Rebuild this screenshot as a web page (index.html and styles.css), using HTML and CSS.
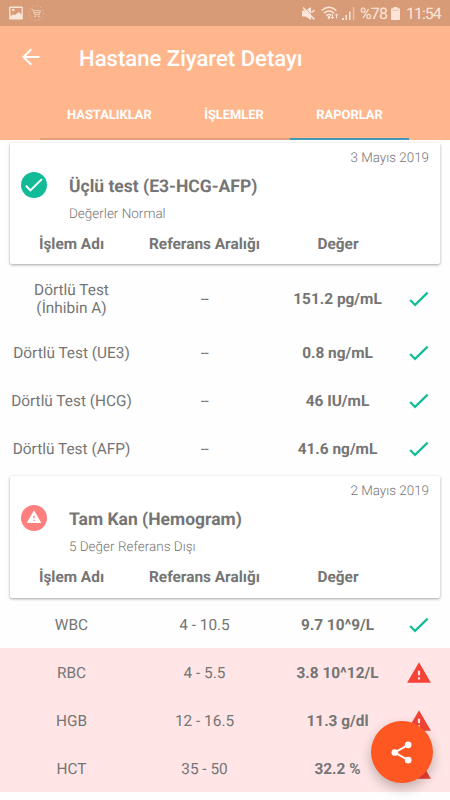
FILE: index.html
```html
<!DOCTYPE html>
<html lang="tr">
<head>
<meta charset="utf-8">
<title>Hastane Ziyaret Detayı</title>
<link rel="stylesheet" href="styles.css">
</head>
<body>
<svg width="0" height="0" class="defs">
  <symbol id="check" viewBox="0 0 24 24"><path d="M3.2 12.9l4.9 5L20.6 5.6" fill="none" stroke="currentColor" stroke-width="2.2"/></symbol>
  <symbol id="warning" viewBox="0 0 24 24"><path fill="currentColor" fill-rule="evenodd" d="M1 21h22L12 2 1 21zm12-3h-2v-2h2v2zm0-4h-2v-4h2v4z"/></symbol>
</svg>
<header class="header">
  <div class="status">
    <svg class="photo" viewBox="0 0 14 14"><path fill="currentColor" fill-rule="evenodd" d="M1 .5h12q.8 0 .8.8v11.4q0 .8-.8.8H1q-.8 0-.8-.8V1.3Q.2.5 1 .5zM1.500 2v8l2.500-1.500 2 .5 3.500-3 3 2.500V2zM3 4a1.3 1.3 0 1 1 2.6 0A1.3 1.3 0 0 1 3 4z"/></svg>
    <svg class="cart" viewBox="0 0 16 16" fill="none" stroke="currentColor"><circle cx="8" cy="8" r="7.2" stroke-dasharray="1 2.8" stroke-width=".8"/><path d="M3.5 4.5H5l1.5 5.2h4.8l1.2-4H5.4M6.2 7.6h5.6" stroke-width=".9"/><circle cx="7" cy="11.6" r=".5"/><circle cx="10.8" cy="11.6" r=".5"/></svg>
    <span class="spacer"></span>
    <svg class="mute" viewBox="0 0 13 13"><path fill="currentColor" d="M0 3.500h3.500L9 0v13L3.500 9.500H0z"/><path d="M1.900 0l11 11.500" stroke="#d79c77" stroke-width="1"/><path d="M1 .5l11.500 12M9.500 5.300l3-2" stroke="currentColor" stroke-width="1.500"/></svg>
    <svg class="wifi" viewBox="0 0 18 14" fill="none" stroke="currentColor" stroke-width="1.4"><path d="M.7 4.5Q8 -2 15.3 4.5M3 7.1q5-4.2 10 0M5.3 9.6q2.7-2.2 5 0"/><path d="M11.5 8v4.5M10 11l1.5 1.6L13 11M15.5 12.5V8M14 9.5l1.5-1.6L17 9.5" stroke-width="1"/><circle cx="8" cy="11.5" r=".7" fill="currentColor"/></svg>
    <svg class="signal" viewBox="0 0 13 13"><path fill="currentColor" d="M0 11h2v2H0zM3.500 8h1.500v5H3.500zM7 4.500h1.500V13H7z"/><path fill="currentColor" opacity=".5" d="M10.800 0h1.500v13h-1.500z"/></svg>
    <span class="battery-text">%78</span>
    <svg class="battery" viewBox="0 0 9 13"><path fill="currentColor" d="M2.500 0h4v1.300H8q1 0 1 1V12q0 1-1 1H1q-1 0-1-1V2.300q0-1 1-1h1.500z"/><path d="M1.500 3.300h6" stroke="#d79c77" stroke-width="1" opacity=".5"/></svg>
    <span class="clock">11:54</span>
  </div>
  <div class="bar">
    <svg class="back" viewBox="0 0 18 18" fill="none" stroke="currentColor" stroke-width="2"><path d="M17.500 9H1.500M9.300 1.200L1.500 9l7.800 7.800"/></svg>
    <h1>Hastane Ziyaret Detayı</h1>
  </div>
  <nav class="tabs">
    <a class="tab first">HASTALIKLAR</a>
    <a class="tab middle">İŞLEMLER</a>
    <a class="tab active">RAPORLAR</a>
  </nav>
</header>
<main>
  <section class="card">
    <div class="date">3 Mayıs 2019</div>
    <div class="summary">
      <span class="badge ok"><svg viewBox="0 0 24 24"><use href="#check"/></svg></span>
      <div><h2>Üçlü test (E3-HCG-AFP)</h2><p>Değerler Normal</p></div>
    </div>
    <div class="cols"><b>İşlem Adı</b><b>Referans Aralığı</b><b>Değer</b></div>
  </section>
  <div class="rows one">
    <div class="row tall"><span>Dörtlü Test<br>(İnhibin A)</span><span class="none">--</span><b>151.2 pg/mL</b><svg class="tick"><use href="#check"/></svg></div>
    <div class="row"><span>Dörtlü Test (UE3)</span><span class="none">--</span><b>0.8 ng/mL</b><svg class="tick"><use href="#check"/></svg></div>
    <div class="row"><span>Dörtlü Test (HCG)</span><span class="none">--</span><b>46 IU/mL</b><svg class="tick"><use href="#check"/></svg></div>
    <div class="row"><span>Dörtlü Test (AFP)</span><span class="none">--</span><b>41.6 ng/mL</b><svg class="tick"><use href="#check"/></svg></div>
  </div>
  <section class="card second">
    <div class="date">2 Mayıs 2019</div>
    <div class="summary">
      <span class="badge bad"><svg viewBox="0 0 24 24"><use href="#warning"/></svg></span>
      <div><h2>Tam Kan (Hemogram)</h2><p>5 Değer Referans Dışı</p></div>
    </div>
    <div class="cols"><b>İşlem Adı</b><b>Referans Aralığı</b><b>Değer</b></div>
  </section>
  <div class="rows two">
    <div class="row"><span>WBC</span><span>4 - 10.5</span><b>9.7 10^9/L</b><svg class="tick"><use href="#check"/></svg></div>
    <div class="row out"><span>RBC</span><span>4 - 5.5</span><b>3.8 10^12/L</b><svg class="alert"><use href="#warning"/></svg></div>
    <div class="row out"><span>HGB</span><span>12 - 16.5</span><b>11.3 g/dl</b><svg class="alert"><use href="#warning"/></svg></div>
    <div class="row out"><span>HCT</span><span>35 - 50</span><b>32.2 %</b><svg class="alert"><use href="#warning"/></svg></div>
  </div>
</main>
<button class="fab" aria-label="Paylaş"><svg viewBox="0 0 22 24"><path d="M18 4L4 12l14 8" fill="none" stroke="#fff" stroke-width="2.100"/><g fill="#fff"><circle cx="18" cy="4" r="3.500"/><circle cx="4" cy="12" r="3.500"/><circle cx="18" cy="20" r="3.500"/></g></svg></button>
</body>
</html>
```
FILE: styles.css
```css
* { box-sizing: border-box; }
body { margin: 0; width: 450px; height: 800px; overflow: hidden; background: #fefefe; color: #757575; font-family: Roboto, "Liberation Sans", sans-serif; text-rendering: geometricPrecision; }
h1, h2, p { margin: 0; }
svg { display: block; flex: none; }
.defs { position: absolute; }
.header { height: 140px; background: #ffb68c; color: #fff; }
.status { display: flex; align-items: center; height: 26px; padding: 0 10px 0 9px; background: #d79c77; color: #fbe5d8; font-size: 16px; letter-spacing: -.9px; }
.photo { width: 14px; height: 14px; }
.cart { width: 16px; height: 16px; margin-left: 5px; opacity: .75; }
.spacer { flex: 1; }
.mute { width: 13px; height: 13px; margin-right: 6px; }
.wifi { width: 18px; height: 14px; margin-right: 3px; }
.signal { width: 13px; height: 13px; margin-right: 5px; }
.battery-text { width: 27px; padding-top: 1px; }
.battery { width: 9px; height: 13px; margin: 0 6px 0 4px; }
.clock { width: 34px; padding-top: 1px; letter-spacing: -1px; }
.bar { display: flex; align-items: center; height: 64px; padding: 0 22px; }
.back { width: 18px; height: 18px; margin-top: -2px; }
h1 { margin-left: 39px; padding-top: 1px; font-size: 22.1px; font-weight: 500; line-height: 30px; white-space: nowrap; }
.tabs { display: flex; height: 50px; padding-left: 40px; }
.tab { display: flex; align-items: center; justify-content: center; width: 119px; padding-top: 2px; border-bottom: 2px solid #dfa07b; font-size: 12.9px; font-weight: 700; }
.tab.first { width: 131px; justify-content: flex-start; padding-left: 27px; }
.tab.middle { padding-left: 7px; }
.tab.active { border-color: #4299b5; }
main { padding-top: 3px; }
.card { height: 121px; margin: 0 10px; padding: 6px 11px 0; border-radius: 2px; background: #fff; box-shadow: 0 1px 3px rgba(0,0,0,.36); }
.card.second { height: 122px; }
.date { height: 18px; line-height: 20px; text-align: right; font-size: 13.4px; font-weight: 300; }
.summary { display: flex; height: 61px; padding-top: 4px; }
.badge { display: flex; flex: none; align-items: center; justify-content: center; width: 26px; height: 26px; margin-top: 1px; margin-right: 22px; border-radius: 50%; color: #fff; }
.badge.ok { background: #12bb98; }
.badge.bad { background: #ff7f7f; }
.ok svg { width: 22px; height: 22px; }
.bad svg { width: 16px; height: 16px; margin-top: -2px; }
h2 { height: 30px; font-size: 17.5px; font-weight: 700; line-height: 32px; }
p { height: 24px; font-size: 13.5px; font-weight: 300; line-height: 27px; }
.cols { display: grid; grid-template-columns: 133px 133px 134px; margin-left: -16px; text-align: center; font-size: 15.4px; line-height: 32px; }
.rows.one { padding-top: 5px; }
.rows.two { padding-top: 2px; }
.row { display: grid; grid-template-columns: 133px 133px 133px 28px; align-items: center; height: 48px; padding: 1px 0 0 5px; text-align: center; font-size: 15.4px; line-height: 18px; }
.one .row { padding-top: 0; }
.row.tall { height: 60px; }
.row b { font-size: 15.4px; }
.none { letter-spacing: -.6px; }
.one { height: 212px; }
.out { background: #ffe5e5; }
.tick { width: 24px; height: 24px; margin-left: 3px; color: #12bb98; }
.alert { width: 26px; height: 26px; margin-left: 2px; color: #f44336; }
.fab { position: absolute; left: 371px; top: 721px; display: flex; align-items: center; justify-content: center; width: 62px; height: 62px; padding: 0; border: 0; border-radius: 50%; background: #ff5722; box-shadow: 0 5px 12px rgba(0,0,0,.25); }
.fab svg { width: 21px; height: 23px; margin-right: 1px; }
```
